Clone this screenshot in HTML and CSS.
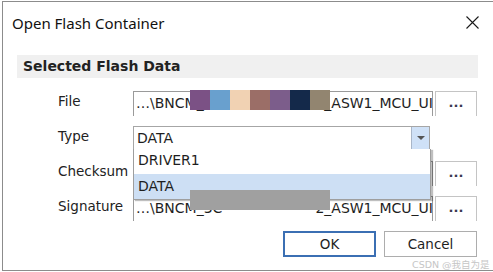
FILE: index.html
```html
<!DOCTYPE html>
<html lang="en">
<head>
    <meta charset="UTF-8">
    <meta name="viewport" content="width=device-width, initial-scale=1.0">
    <title>Open Flash Container</title>
    <link rel="stylesheet" href="styles.css">
</head>
<body>

    <div class="window">
        <div class="titlebar">
            <span class="title">Open Flash Container</span>
            <svg class="close" width="13" height="13" viewBox="0 0 13 13">
                <path d="M0.5 0.5 L12.5 12.5 M12.5 0.5 L0.5 12.5" stroke="#1a1a1a" stroke-width="1.1" fill="none"/>
            </svg>
        </div>

        <div class="group">
            <div class="group-header">Selected Flash Data</div>

            <div class="form">
                <label class="lbl">File</label>
                <div class="field">
                    <span class="path-left">…\BNCM_3C</span>
                    <span class="path-right">2_ASW1_MCU_UI</span>
                </div>
                <div class="browse">...</div>

                <label class="lbl">Type</label>
                <div class="combo-cell">
                    <div class="combo">
                        <span class="combo-value">DATA</span>
                        <span class="combo-btn"><span class="arrow"></span></span>
                    </div>
                    <ul class="dropdown">
                        <li>DRIVER1</li>
                        <li class="selected">DATA</li>
                    </ul>
                </div>
                <div></div>

                <label class="lbl">Checksum</label>
                <div class="field"></div>
                <div class="browse">...</div>

                <label class="lbl">Signature</label>
                <div class="field">
                    <span class="path-left">…\BNCM_3C</span>
                    <span class="path-right">2_ASW1_MCU_UI</span>
                </div>
                <div class="browse">...</div>

                <!-- redacted parts of the paths -->
                <div class="redact-colors">
                    <span style="background:#7b5185"></span>
                    <span style="background:#69a0ce"></span>
                    <span style="background:#f1d2b3"></span>
                    <span style="background:#9b6e67"></span>
                    <span style="background:#7c5d8b"></span>
                    <span style="background:#14294a"></span>
                    <span style="background:#928570"></span>
                </div>
                <div class="redact-gray"></div>
            </div>

            <div class="footer">
                <button class="btn btn-default">OK</button>
                <button class="btn">Cancel</button>
            </div>
        </div>

        <div class="watermark">CSDN @我自为是</div>
    </div>

</body>
</html>
```

FILE: styles.css
```css
body {
    margin: 0;
    background: white;
    overflow: hidden;
    font-family: 'DejaVu Sans', sans-serif;
    color: #1e1e1e;
}
.window {
    position: relative;
    margin: 1px 0 0 2px;
    width: 491px;
    height: 270px;
    box-sizing: border-box;
    border: 1px solid #8c8c8c;
    border-right: none;
    background: white;
}
.titlebar {
    display: flex;
    justify-content: space-between;
    align-items: flex-start;
    height: 53px;
    padding-left: 9px;
}
.title {
    font-family: 'Noto Sans', sans-serif;
    font-size: 15px;
    line-height: 20px;
    margin-top: 11px;
    color: #111;
}
.close {
    margin-top: 14px;
    margin-right: 14px;
}
.group {
    margin: 0 15px 0 14px;
}
.group-header {
    background: #f0f0f0;
    height: 23px;
    padding-left: 6px;
    font-weight: bold;
    font-size: 14px;
    line-height: 23px;
    color: #222;
}
.form {
    position: relative;
    display: grid;
    grid-template-columns: 73px 300px 42px;
    grid-auto-rows: 25px;
    column-gap: 2px;
    row-gap: 10px;
    padding: 13px 1px 0 41px;
    height: 143px;
    box-sizing: border-box;
    overflow: hidden;
}
.lbl {
    font-size: 13.5px;
    line-height: 16px;
    padding-top: 2px;
    color: #222;
}
.field {
    display: flex;
    justify-content: space-between;
    border: 1px solid #9a9a9a;
    border-bottom: none;
    overflow: hidden;
    white-space: nowrap;
    font-size: 14px;
    line-height: 23px;
    background: white;
}
.path-left {
    padding-left: 2px;
}
.path-right {
    margin-right: -1px;
}
.browse {
    border: 1px solid #c4c4c4;
    border-bottom: none;
    text-align: center;
    font-size: 13px;
    font-weight: bold;
    line-height: 22px;
    color: #3a3a50;
}
.combo-cell {
    position: relative;
    z-index: 2;
}
.combo {
    display: flex;
    width: 297px;
    height: 24px;
    box-sizing: border-box;
    border: 1px solid #a6a6a6;
    font-size: 14px;
    line-height: 22px;
}
.combo-value {
    flex: 1;
    padding-left: 3px;
}
.combo-btn {
    width: 17px;
    background: #cfe1f7;
    border-left: 1px solid #a9b6c8;
    display: flex;
    align-items: center;
    justify-content: center;
}
.arrow {
    width: 0;
    height: 0;
    border-left: 4px solid transparent;
    border-right: 4px solid transparent;
    border-top: 4px solid #555;
}
.dropdown {
    position: absolute;
    left: 0;
    top: 23px;
    width: 298px;
    margin: 0;
    padding: 0;
    list-style: none;
    box-sizing: border-box;
    border: 1px solid #9e9e9e;
    border-top: none;
    background: white;
    box-shadow: 2px 1px 1px rgba(0, 0, 0, 0.25);
    font-size: 14px;
}
.dropdown li {
    height: 25px;
    line-height: 23px;
    padding-left: 4px;
}
.dropdown li.selected {
    height: 25px;
    background: #cddff4;
    line-height: 24px;
}
.redact-colors {
    position: absolute;
    left: 173px;
    top: 12px;
    display: flex;
    height: 20px;
}
.redact-colors span {
    width: 20px;
}
.redact-gray {
    position: absolute;
    left: 173px;
    top: 112px;
    width: 140px;
    height: 20px;
    background: #a0a0a0;
    z-index: 3;
}
.footer {
    display: flex;
    justify-content: flex-end;
    gap: 8px;
    margin-top: 10px;
    padding-right: 1px;
}
.btn {
    width: 93px;
    height: 26px;
    box-sizing: border-box;
    border: 1px solid #adadad;
    background: white;
    font-family: 'DejaVu Sans', sans-serif;
    font-size: 13.5px;
    color: #1e1e1e;
    padding: 0;
}
.btn-default {
    border: 2px solid #3b6fb3;
}
.watermark {
    position: absolute;
    left: 409px;
    top: 255px;
    font-family: 'DejaVu Sans', 'Noto Sans CJK SC', sans-serif;
    font-size: 9.5px;
    color: #c6c6c6;
    white-space: nowrap;
}
```
